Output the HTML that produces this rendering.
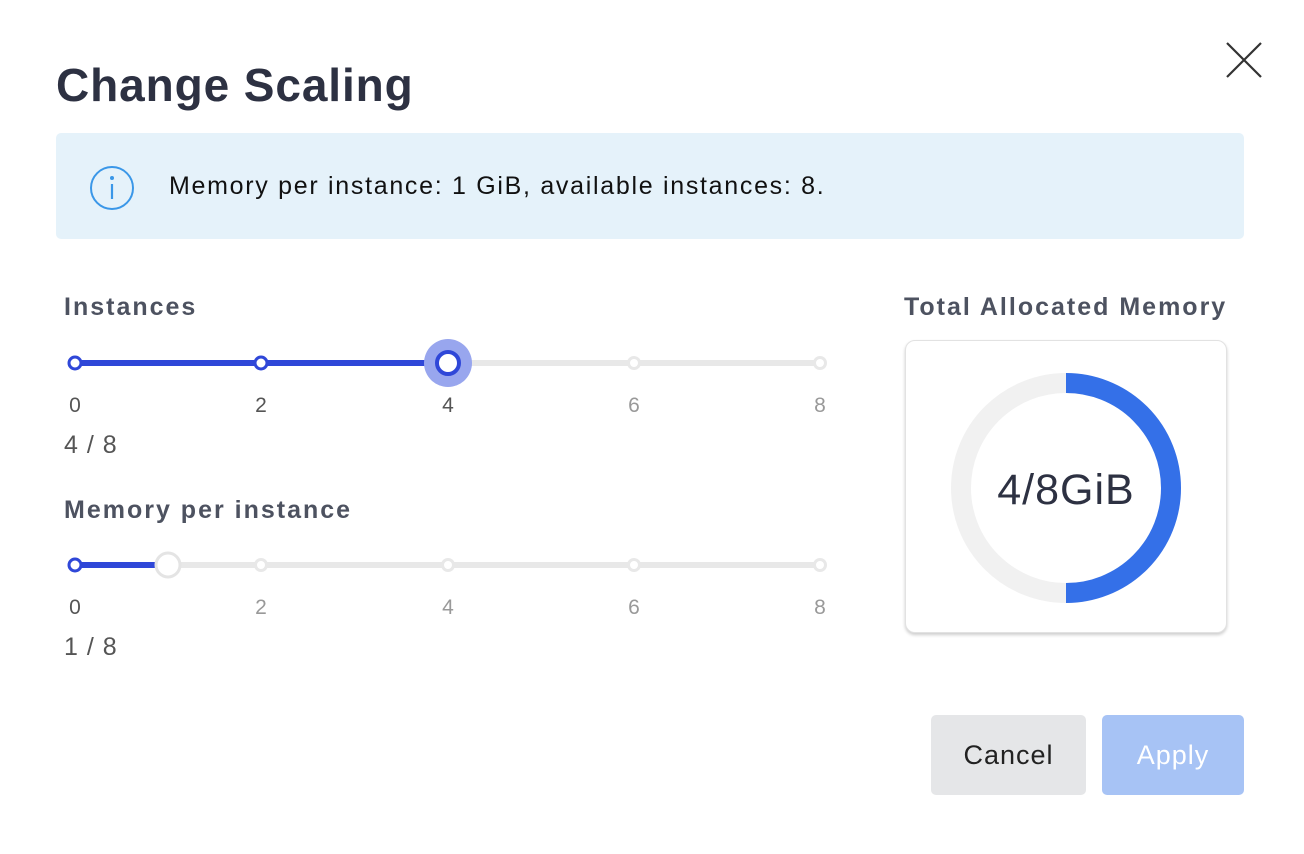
<!DOCTYPE html>
<html><head><style>
body{margin:0;width:1304px;height:854px;background:#fff;font-family:"Liberation Sans",sans-serif;position:relative;overflow:hidden}
.a{position:absolute}
.l{font-size:25px;font-weight:bold;color:#4d5260;letter-spacing:2px}
</style></head><body>
<div class="a" style="left:56px;top:58px;font-size:46px;font-weight:bold;color:#2d3142;letter-spacing:0.9px">Change Scaling</div>
<svg class="a" style="left:1224px;top:40px" width="40" height="40"><path d="M3 3L37 37M37 3L3 37" stroke="#333" stroke-width="2.2"/></svg>
<div class="a" style="left:56px;top:133px;width:1188px;height:106px;background:#e5f2fa;border-radius:5px"></div>
<svg class="a" style="left:89px;top:165px" width="46" height="46"><circle cx="23" cy="23" r="21" fill="none" stroke="#3a97e8" stroke-width="2"/><circle cx="23" cy="13" r="2" fill="#3a97e8"/><path d="M23 19v15" stroke="#3a97e8" stroke-width="2.2"/></svg>
<div class="a" style="left:169px;top:172px;font-size:25px;color:#111;letter-spacing:1.7px">Memory per instance: 1 GiB, available instances: 8.</div>
<div class="a l" style="left:64px;top:293px">Instances</div>
<div class="a l" style="left:64px;top:496px">Memory per instance</div>
<div class="a l" style="left:904px;top:293px">Total Allocated Memory</div>
<svg class="a" style="left:0;top:0" width="900" height="700" font-family="Liberation Sans" font-size="21" fill="#555">
<line x1="75" y1="363" x2="820" y2="363" stroke="#e8e8e8" stroke-width="6"/>
<line x1="75" y1="363" x2="448" y2="363" stroke="#2f47d8" stroke-width="6"/>
<circle cx="75" cy="363" r="6" fill="#fff" stroke="#2f47d8" stroke-width="3"/>
<circle cx="261" cy="363" r="6" fill="#fff" stroke="#2f47d8" stroke-width="3"/>
<circle cx="634" cy="363" r="5.5" fill="#fff" stroke="#e8e8e8" stroke-width="3"/>
<circle cx="820" cy="363" r="5.5" fill="#fff" stroke="#e8e8e8" stroke-width="3"/>
<circle cx="448" cy="363" r="24" fill="#98a6ee"/>
<circle cx="448" cy="363" r="11" fill="#fff" stroke="#2f47d8" stroke-width="4"/>
<text x="75" y="412" text-anchor="middle">0</text><text x="261" y="412" text-anchor="middle">2</text><text x="448" y="412" text-anchor="middle">4</text><text x="634" y="412" text-anchor="middle" fill="#999">6</text><text x="820" y="412" text-anchor="middle" fill="#999">8</text>
<text x="64" y="453" font-size="25" letter-spacing="1">4 / 8</text>
<line x1="75" y1="565" x2="820" y2="565" stroke="#e8e8e8" stroke-width="6"/>
<line x1="75" y1="565" x2="168" y2="565" stroke="#2f47d8" stroke-width="6"/>
<circle cx="75" cy="565" r="6" fill="#fff" stroke="#2f47d8" stroke-width="3"/>
<circle cx="261" cy="565" r="5.5" fill="#fff" stroke="#e8e8e8" stroke-width="3"/>
<circle cx="448" cy="565" r="5.5" fill="#fff" stroke="#e8e8e8" stroke-width="3"/>
<circle cx="634" cy="565" r="5.5" fill="#fff" stroke="#e8e8e8" stroke-width="3"/>
<circle cx="820" cy="565" r="5.5" fill="#fff" stroke="#e8e8e8" stroke-width="3"/>
<circle cx="168" cy="565" r="12" fill="#fff" stroke="#e4e4e4" stroke-width="3"/>
<text x="75" y="614" text-anchor="middle">0</text><text x="261" y="614" text-anchor="middle" fill="#999">2</text><text x="448" y="614" text-anchor="middle" fill="#999">4</text><text x="634" y="614" text-anchor="middle" fill="#999">6</text><text x="820" y="614" text-anchor="middle" fill="#999">8</text>
<text x="64" y="655" font-size="25" letter-spacing="1">1 / 8</text>
</svg>
<div class="a" style="left:905px;top:340px;width:320px;height:291px;border:1px solid #e2e2e2;border-radius:10px;box-shadow:0 2px 3px rgba(0,0,0,.2);background:#fff"></div>
<svg class="a" style="left:940px;top:362px" width="252" height="252"><circle cx="126" cy="126" r="105" fill="none" stroke="#f1f1f1" stroke-width="20"/><path d="M126 21A105 105 0 0 1 126 231" fill="none" stroke="#3470e8" stroke-width="20"/><text x="126" y="142" text-anchor="middle" font-family="Liberation Sans" font-size="43" letter-spacing="1" fill="#2d3142">4/8GiB</text></svg>
<div class="a" style="left:931px;top:715px;width:155px;height:80px;background:#e5e6e8;border-radius:5px;font-size:27px;color:#222;text-align:center;line-height:80px;letter-spacing:1px">Cancel</div>
<div class="a" style="left:1102px;top:715px;width:142px;height:80px;background:#a7c3f5;border-radius:5px;font-size:27px;color:#fff;text-align:center;line-height:80px;letter-spacing:1px">Apply</div>
</body></html>
